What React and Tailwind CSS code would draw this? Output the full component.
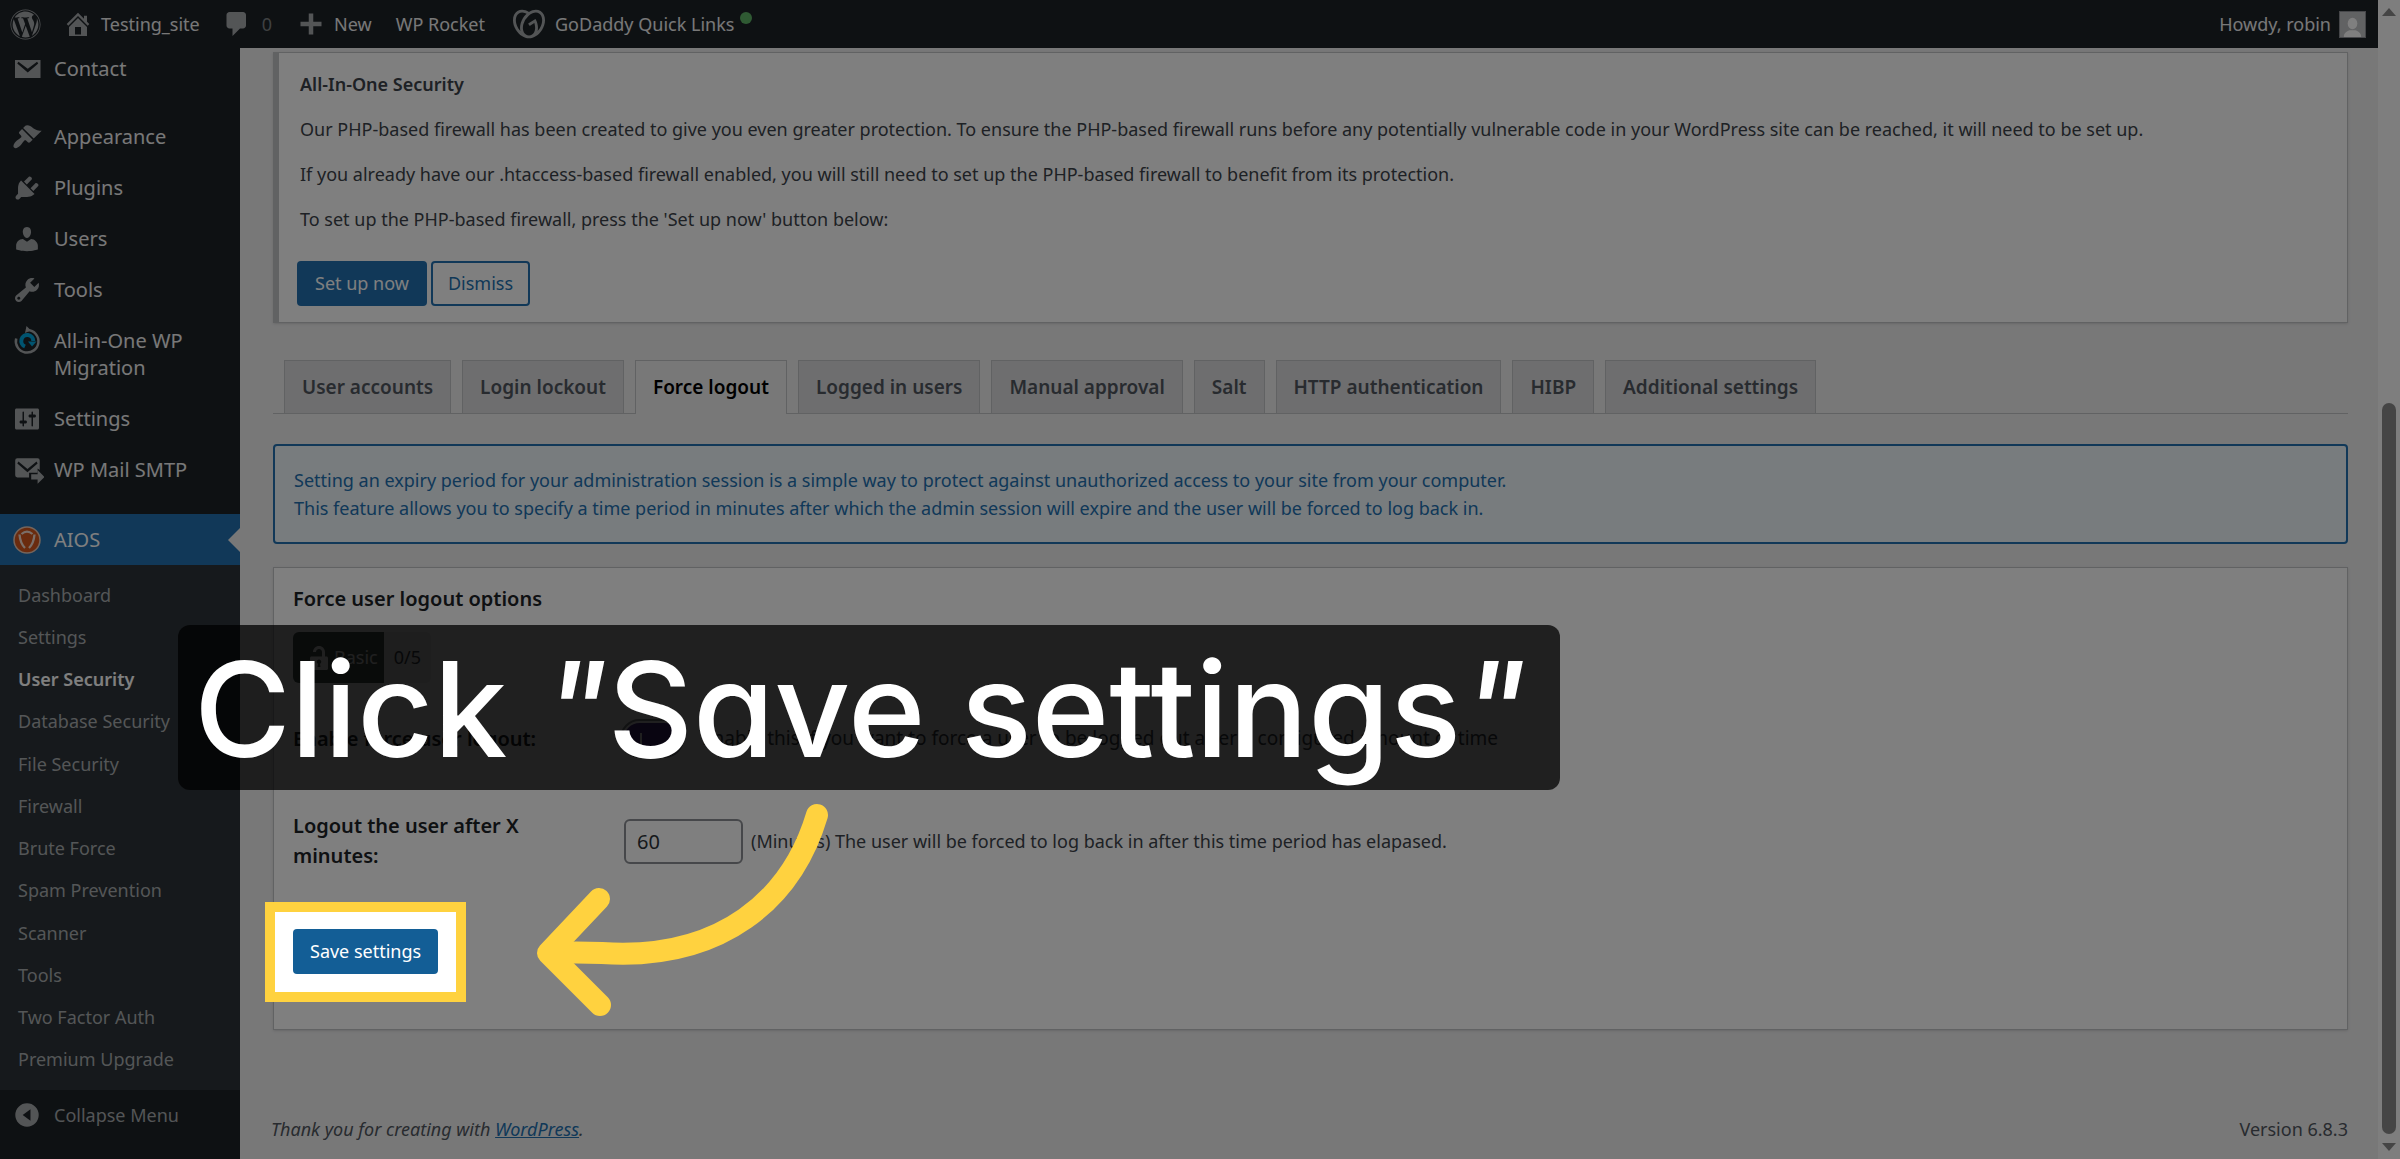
import React from "react";
import { FaWordpress } from "react-icons/fa";
import { SiGodaddy } from "react-icons/si";

const paths = {
  home: "M16 8.5l1.53 1.53-1.06 1.06L10 4.6l-6.47 6.49-1.06-1.06L10 2.5l4 4v-2h2v4zm-6-2.46l6 5.99V18H4v-5.97zM12 17v-5H8v5h4z",
  comment: "M5 2h9c1.1 0 2 .9 2 2v7c0 1.1-.9 2-2 2h-2l-5 5v-5H5c-1.1 0-2-.9-2-2V4c0-1.1.9-2 2-2z",
  plus: "M17 8.5v3h-5.5V17h-3v-5.5H3v-3h5.500V3h3v5.500z",
  mail: "M2 4h17v12H2zM4.300 5.200L3.500 6.400l7 5.900 7-5.900-.8-1.200-6.200 4.600z",
  appearance:
    "M14.48 11.06L7.41 3.99l1.5-1.5c.5-.56 2.3-.47 3.51.32 1.21.8 1.43 1.28 2.91 2.1 1.18.64 2.45 1.26 4.45.85zm-.71.71L6.7 4.7 4.93 6.47c-.39.39-.39 1.02 0 1.41l1.06 1.06c.39.39.39 1.03 0 1.42-.6.6-1.43 1.11-2.21 1.69-.35.26-.7.53-1.01.84C1.43 14.23.4 16.08 1.4 17.07c.99 1 2.84-.03 4.18-1.36.31-.31.58-.66.85-1.02.57-.78 1.08-1.61 1.69-2.21.39-.39 1.02-.39 1.41 0l1.06 1.06c.39.39 1.02.39 1.41 0z",
  plugins:
    "M13.11 4.36L9.87 7.6 8 5.73l3.24-3.24c.35-.34 1.05-.2 1.56.32.52.51.66 1.21.31 1.55zm-8 1.77l.91-1.12 9.01 9.01-1.19.84c-.71.71-2.63 1.16-3.82 1.16H6.14L4.9 17.26c-.59.59-1.54.59-2.12 0-.59-.58-.59-1.53 0-2.12l1.24-1.24v-3.88c0-1.13.4-3.19 1.09-3.89zm7.26 3.97l3.24-3.24c.34-.35 1.04-.21 1.55.31.52.51.66 1.21.31 1.55l-3.24 3.25z",
  users:
    "M10 9.25c-2.27 0-2.73-3.44-2.73-3.44C7 4.02 7.82 2 9.97 2c2.16 0 2.98 2.02 2.71 3.81 0 0-.41 3.44-2.68 3.44zm0 2.57L12.72 10c2.39 0 4.52 2.33 4.52 4.53v2.49s-3.65 1.13-7.24 1.13c-3.65 0-7.24-1.13-7.24-1.13v-2.49c0-2.25 1.94-4.48 4.47-4.48z",
  tools:
    "M16.68 9.77c-1.34 1.34-3.3 1.67-4.95.99l-5.41 6.52c-.99.99-2.59.99-3.58 0s-.99-2.59 0-3.57l6.52-5.42c-.68-1.65-.35-3.61.99-4.95 1.28-1.28 3.12-1.62 4.72-1.06l-2.89 2.89 2.82 2.82 2.86-2.87c.53 1.58.18 3.39-1.08 4.65zM3.81 16.21c.4.39 1.04.39 1.43 0 .4-.4.4-1.04 0-1.43-.39-.4-1.03-.4-1.43 0-.39.39-.39 1.03 0 1.43z",
  settings:
    "M18 16V4c0-.55-.45-1-1-1H3c-.55 0-1 .45-1 1v12c0 .55.45 1 1 1h14c.55 0 1-.45 1-1zM8 11h1c.55 0 1 .45 1 1s-.45 1-1 1H8v1.500c0 .28-.22.5-.5.5s-.5-.22-.5-.5V13H6c-.55 0-1-.45-1-1s.45-1 1-1h1V5.500c0-.28.22-.5.5-.5s.5.22.5.5V11zm5-2h-1c-.55 0-1-.45-1-1s.45-1 1-1h1V5.500c0-.28.22-.5.5-.5s.5.22.5.5V7h1c.55 0 1 .45 1 1s-.45 1-1 1h-1v5.500c0 .28-.22.5-.5.5s-.5-.22-.5-.5V9z",
  lock: "M12 9V6c0-1.100-.9-2-2-2s-2 .9-2 2H6c0-2.210 1.790-4 4-4s4 1.790 4 4v3h1c.55 0 1 .45 1 1v7c0 .55-.45 1-1 1H5c-.55 0-1-.45-1-1v-7c0-.55.45-1 1-1h7zm-1 7l-.36-2.150c.51-.24.860-.75.860-1.350 0-.83-.67-1.500-1.500-1.500s-1.500.67-1.500 1.500c0 .6.35 1.110.860 1.350L9 16h2z",
};

function Icon({ name, className = "fill-[#a7aaad]" }) {
  return (
    <svg viewBox="0 0 20 20" aria-hidden="true" className={`size-[30px] shrink-0 ${className}`}>
      <path fillRule="evenodd" d={paths[name]} />
    </svg>
  );
}

function MigrationIcon() {
  return (
    <svg viewBox="0 0 30 30" aria-hidden="true" className="size-[30px] shrink-0" fill="none">
      <path d="M4.200 12.500a11.300 11.300 0 1 0 11.500-8.500" stroke="#a7aaad" strokeWidth="2.500" />
      <path d="M14.500 0l4.500 4.500-6 2.500z" fill="#a7aaad" />
      <path d="M13 20.500a6 6 0 1 1 8.300-5.500" stroke="#00a8e0" strokeWidth="4" />
      <path d="M16 15.500h8.500l-4.500 5z" fill="#00a8e0" />
    </svg>
  );
}

function MailSendIcon() {
  return (
    <svg viewBox="0 0 30 30" aria-hidden="true" className="-mr-[2px] size-[32px] shrink-0 fill-[#a7aaad]">
      <path d="M5 4h19a2 2 0 0 1 2 2v9l-2-1.500v4h-8V22H5a2 2 0 0 1-2-2V6a2 2 0 0 1 2-2zm1 3l-1 2 9.500 8L24 9l-1-2-8.500 7z" />
      <path d="M18 19h6v-4l6.500 6.500L24 28v-4h-6z" />
    </svg>
  );
}

function ShieldIcon() {
  return (
    <svg viewBox="0 0 30 30" aria-hidden="true" className="size-[30px] shrink-0">
      <circle cx="15" cy="15" r="13" fill="#d4571c" stroke="#e8c9b8" strokeWidth="1.500" />
      <path d="M7.500 9.500c.5 6 2.500 10.500 5.500 13.500M22.500 9.500c-.5 6-2.500 10.500-5.500 13.500M9.500 9c3.500-3 7.500-3 11 0" fill="none" stroke="#f5ddd0" strokeWidth="2.300" />
    </svg>
  );
}

const menu = [
  ["Appearance", <Icon name="appearance" />],
  ["Plugins", <Icon name="plugins" />],
  ["Users", <Icon name="users" />],
  ["Tools", <Icon name="tools" />],
  ["All-in-One WP Migration", <MigrationIcon />],
  ["Settings", <Icon name="settings" />],
  ["WP Mail SMTP", <MailSendIcon />],
];

const submenu = [
  "Dashboard", "Settings", "User Security", "Database Security", "File Security", "Firewall",
  "Brute Force", "Spam Prevention", "Scanner", "Tools", "Two Factor Auth", "Premium Upgrade",
];

const tabs = [
  "User accounts", "Login lockout", "Force logout", "Logged in users", "Manual approval",
  "Salt", "HTTP authentication", "HIBP", "Additional settings",
];

function MenuItem({ label, icon }) {
  return (
    <li>
      <a href="#" className="flex items-start gap-3 py-3 pr-6 pl-3 text-[20px] leading-[27px] text-[#f0f0f1]">
        <span className="flex h-[27px] items-center">{icon}</span>
        <span className="flex-1">{label}</span>
      </a>
    </li>
  );
}

function TopBar() {
  return (
    <header className="flex h-12 items-center bg-[#1d2327] pr-3 pl-[10px] text-[18px] leading-[27px] text-[#f0f0f1]">
      <a href="#" aria-label="About WordPress" className="mr-[22px]">
        <FaWordpress className="size-[31px] text-[#a7aaad]" />
      </a>
      <a href="#" className="mr-[22px] flex items-center gap-2">
        <Icon name="home" />
        Testing_site
      </a>
      <a href="#" className="mr-6 flex items-center gap-[10px] text-[#7d8184]">
        <Icon name="comment" />0
      </a>
      <a href="#" className="mr-6 flex items-center gap-2">
        <Icon name="plus" />
        New
      </a>
      <a href="#" className="mr-7">WP Rocket</a>
      <a href="#" className="flex items-center gap-[10px]">
        <SiGodaddy className="size-[32px] text-[#a7aaad]" />
        GoDaddy Quick Links
        <span className="-ml-1 mb-[12px] size-3 rounded-full bg-[#5fb567]" />
      </a>
      <a href="#" className="ml-auto flex items-center gap-2">
        Howdy, robin
        <svg viewBox="0 0 26 26" aria-hidden="true" className="size-[27px] border border-[#8c8f94] bg-[#c3c4c7] fill-white">
          <ellipse cx="13" cy="12" rx="5" ry="6" />
          <path d="M4 26c0-5 4-6 6-7h6c2 1 6 2 6 7z" />
        </svg>
      </a>
    </header>
  );
}

function Sidebar() {
  return (
    <nav aria-label="Main menu" className="flex w-60 shrink-0 flex-col bg-[#1d2327]">
      <ul className="-mt-[5px]">
        <MenuItem label="Contact" icon={<Icon name="mail" />} />
      </ul>
      <ul className="mt-[17px]">
        {menu.map(([label, icon]) => (
          <MenuItem key={label} label={label} icon={icon} />
        ))}
      </ul>
      <a href="#" className="relative mt-[19px] flex items-center gap-3 bg-[#2271b1] py-3 pl-3 text-[20px] leading-[27px] text-white">
        <span className="flex h-[27px] items-center">
          <ShieldIcon />
        </span>
        AIOS
        <span className="absolute top-1/2 right-0 -translate-y-1/2 border-y-12 border-r-12 border-y-transparent border-r-[#f0f0f1]" />
      </a>
      <ul className="flex flex-1 flex-col bg-[#2c3338] py-[9px] text-[18px] leading-[27px]">
        {submenu.map((label) => (
          <li key={label} className="flex flex-1 items-center pl-[18px]">
            <a href="#" className={label === "User Security" ? "font-semibold text-white" : "text-[#a9acaf]"}>
              {label}
            </a>
          </li>
        ))}
      </ul>
      <button type="button" className="mb-[19px] flex items-center gap-3 py-3 pl-3 text-[18px] leading-[26px] text-[#a7aaad]">
        <svg viewBox="0 0 30 30" aria-hidden="true" className="h-[26px] w-[30px] fill-[#a7aaad]">
          <path fillRule="evenodd" d="M15 1.500a13.500 13.500 0 1 1 0 27 13.500 13.500 0 0 1 0-27zM19 8.500L10 15l9 6.500z" />
        </svg>
        Collapse Menu
      </button>
    </nav>
  );
}

function Notice() {
  return (
    <section className="border border-l-6 border-[#c3c4c7] bg-white pt-[18px] pb-4 text-[18px] leading-[27px] shadow-sm">
      <div className="flex flex-col gap-[18px] px-[21px]">
        <h3 className="font-semibold">All-In-One Security</h3>
        <p>
          Our PHP-based firewall has been created to give you even greater protection. To ensure the PHP-based firewall runs before any
          potentially vulnerable code in your WordPress site can be reached, it will need to be set up.
        </p>
        <p>If you already have our .htaccess-based firewall enabled, you will still need to set up the PHP-based firewall to benefit from its protection.</p>
        <p>To set up the PHP-based firewall, press the 'Set up now' button below:</p>
      </div>
      <div className="mt-7 flex gap-1 px-[18px]">
        <button type="button" className="h-[45px] rounded-[4px] bg-[#2271b1] px-[18px] text-white">Set up now</button>
        <button type="button" className="h-[45px] rounded-[4px] border-2 border-[#2271b1] px-[15px] text-[#2271b1]">Dismiss</button>
      </div>
    </section>
  );
}

function Tabs() {
  return (
    <nav aria-label="User security sections" className="mt-[37px] flex gap-[11px] border-b border-[#c3c4c7] pl-[11px] text-[19px] leading-[27px] font-semibold">
      {tabs.map((label) => (
        <a
          key={label}
          href="#"
          className={
            label === "Force logout"
              ? "-mb-px border border-b-0 border-[#c3c4c7] bg-[#f0f0f1] px-[17px] pt-[13px] pb-3 text-black"
              : "border border-b-0 border-[#c3c4c7] bg-[#dcdcde] px-[17px] pt-[13px] pb-3 text-[#50575e]"
          }
        >
          {label}
        </a>
      ))}
    </nav>
  );
}

function LogoutForm() {
  return (
    <form className="mt-[23px] border border-[#c3c4c7] bg-white px-[19px] pt-[17px] pb-[27px] text-[18px] leading-[27px] shadow-sm">
      <h3 className="text-[20px] font-semibold text-[#1d2327]">Force user logout options</h3>
      <div className="mt-5 flex h-[51px] w-fit items-center overflow-hidden rounded-[6px] bg-[#f0f0f1]">
        <span className="flex h-full items-center bg-[#4f5c55] pr-[6px] pl-[11px] text-white">
          <Icon name="lock" className="fill-white" />
          Basic
        </span>
        <span className="px-[10px]">0/5</span>
      </div>
      <div className="mt-[38px] grid grid-cols-[329px_1fr] items-center gap-y-[55px]">
        <label htmlFor="enable-logout" className="pr-12 text-[20px] leading-[30px] font-semibold text-[#1d2327]">
          Enable force user logout:
        </label>
        <div className="flex h-[35px] items-center gap-5">
          <span className="relative flex h-[35px] w-[60px] items-center rounded-full border-2 border-white bg-[#4b2a86] outline-2 outline-[#8c8f94]">
            <input id="enable-logout" type="checkbox" defaultChecked className="absolute inset-0 size-full appearance-none rounded-full" />
            <span className="ml-4 h-3 w-[2px] bg-white" />
          </span>
          <span className="text-[19px]">Enable this if you want to force a user to be logged out after a configured amount of time</span>
        </div>
        <label htmlFor="logout-minutes" className="pr-20 text-[20px] leading-[30px] font-semibold text-[#1d2327]">
          Logout the user after X minutes:
        </label>
        <div className="flex items-center gap-2 pl-[2px]">
          <input
            id="logout-minutes"
            type="text"
            defaultValue="60"
            className="h-[45px] w-[119px] rounded-[6px] border-2 border-[#8c8f94] bg-white px-[11px] text-[20px] text-[#2c3338]"
          />
          <span>(Minutes) The user will be forced to log back in after this time period has elapased.</span>
        </div>
      </div>
      <div className="relative z-20 mt-[31px] -ml-7 w-fit border-10 border-[#ffd23f] bg-white px-[18px] pt-[17px] pb-[18px]">
        <button type="button" className="block h-[45px] rounded-[4px] bg-[#135e96] px-[17px] text-white">Save settings</button>
      </div>
    </form>
  );
}

function ScrollBar() {
  return (
    <div aria-hidden="true" className="flex w-[22px] shrink-0 flex-col items-center bg-[#fcfcfc] py-2">
      <span className="border-x-7 border-b-8 border-x-transparent border-b-[#8b8b8b]" />
      <span className="grow-386" />
      <span className="w-[14px] grow-730 rounded-full bg-[#8b8b8b]" />
      <span className="mt-[9px] border-x-7 border-t-8 border-x-transparent border-t-[#8b8b8b]" />
    </div>
  );
}

export default function App() {
  return (
    <div className="relative flex min-h-screen font-['Noto_Sans',sans-serif] text-[#3c434a]">
      <div className="flex min-w-0 flex-1 flex-col">
        <TopBar />
        <div className="flex flex-1">
          <Sidebar />
          <main className="flex min-w-0 flex-1 flex-col bg-[#f0f0f1] pt-1 pr-[30px] pl-[33px]">
            <Notice />
            <Tabs />
            <p className="mt-[30px] rounded-[4px] border-2 border-[#2271b1] bg-[#f0f8fd] px-[19px] py-5 text-[18px] leading-[28px] text-[#2271b1]">
              Setting an expiry period for your administration session is a simple way to protect against unauthorized access to your site
              from your computer.
              <br />
              This feature allows you to specify a time period in minutes after which the admin session will expire and the user will be
              forced to log back in.
            </p>
            <LogoutForm />
            <footer className="mt-auto mb-4 -ml-[2px] flex justify-between text-[18px] leading-[27px] text-[#50575e]">
              <p className="italic">
                Thank you for creating with <a href="#" className="text-[#2271b1] underline">WordPress</a>.
              </p>
              <p>Version 6.8.3</p>
            </footer>
          </main>
        </div>
      </div>
      <ScrollBar />
      <div className="pointer-events-none absolute inset-0 z-10 bg-black/50" />
      <div className="absolute top-[625px] left-[178px] z-30 rounded-[12px] bg-black/75 pt-1 pr-[34px] pl-4 font-['Inter',sans-serif] text-[132px] leading-[161px] font-medium whitespace-nowrap text-white [font-feature-settings:'cv11']">
        Click <span className="italic">"</span>Save settings<span className="italic">"</span>
      </div>
      <svg viewBox="530 800 300 220" aria-hidden="true" className="absolute top-[799px] left-[530px] z-30 w-[300px]" fill="none" stroke="#ffd23f" strokeWidth="22" strokeLinecap="round" strokeLinejoin="round">
        <path d="M817 816C792 900 722 962 602 954Q576 953 550 954" />
        <path d="M599 900L548 954L600 1006" />
      </svg>
    </div>
  );
}
